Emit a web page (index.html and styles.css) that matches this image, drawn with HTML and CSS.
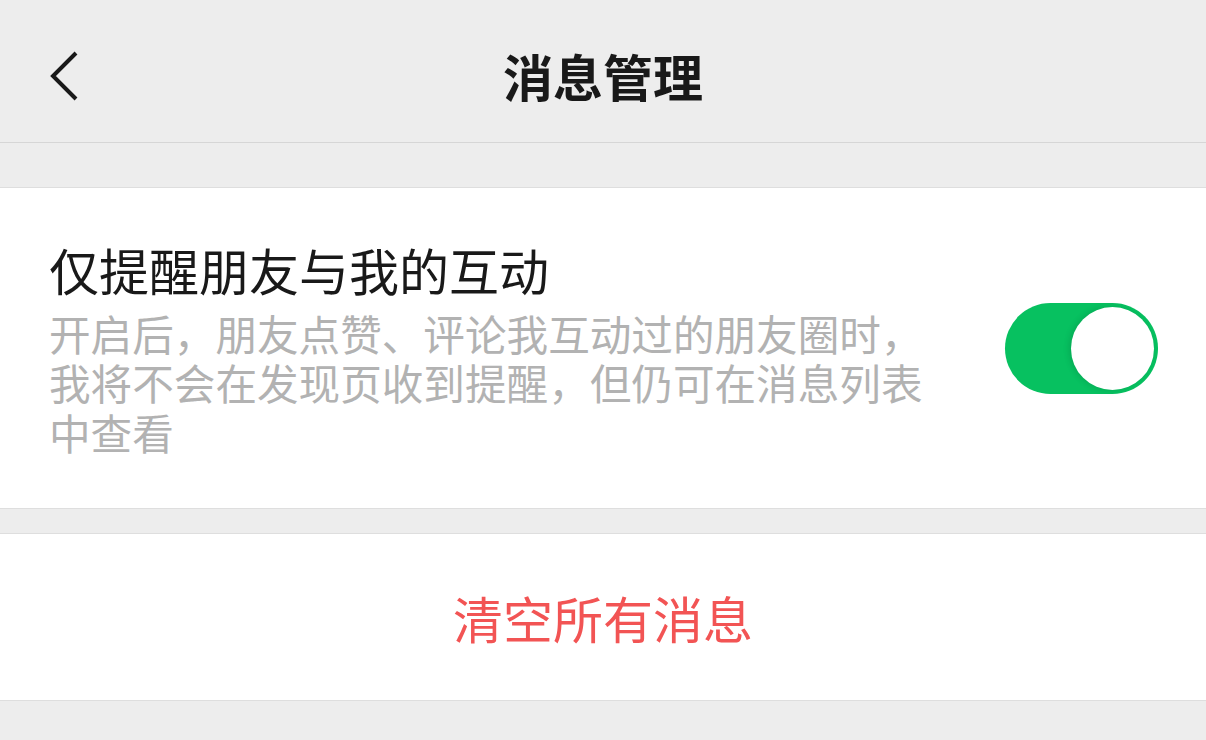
FILE: index.html
```html
<!DOCTYPE html>
<html lang="zh-CN">
<head>
<meta charset="utf-8">
<title>消息管理</title>
<link rel="stylesheet" href="styles.css">
</head>
<body>
<header class="navbar">
  <div class="nav-left">
    <svg class="back" width="40" height="60" viewBox="0 0 40 60" aria-hidden="true">
      <polyline points="28,4 5,27 28,50" fill="none" stroke="#191919" stroke-width="4" stroke-linecap="butt" stroke-linejoin="miter"/>
    </svg>
  </div>
  <h1 class="nav-title">消息管理</h1>
  <div class="nav-right"></div>
</header>

<section class="group group-first">
  <div class="setting-row">
    <div class="setting-text">
      <div class="setting-title">仅提醒朋友与我的互动</div>
      <div class="setting-desc">开启后，朋友点赞、评论我互动过的朋友圈时，我将不会在发现页收到提醒，但仍可在消息列表中查看</div>
    </div>
    <div class="switch switch-on"><div class="switch-knob"></div></div>
  </div>
</section>

<section class="group group-second">
  <div class="danger-row">清空所有消息</div>
</section>
</body>
</html>
```

FILE: styles.css
```css
html, body {
  margin: 0;
  padding: 0;
}
body {
  background: #ededed;
  font-family: "Noto Sans CJK SC", "Noto Sans", sans-serif;
  color: #191919;
  width: 1206px;
  height: 740px;
  overflow: hidden;
}
.navbar {
  box-sizing: border-box;
  height: 143px;
  padding-top: 8px;
  border-bottom: 1px solid #d6d6d6;
  display: grid;
  grid-template-columns: 1fr auto 1fr;
  align-items: center;
}
.nav-left {
  padding-left: 48px;
  display: flex;
  align-items: center;
}
.back {
  display: block;
  margin-top: 8px;
}
.nav-title {
  margin: 0;
  font-size: 50px;
  font-weight: 700;
  line-height: 60px;
  color: #191919;
}
.group {
  background: #fff;
  border-top: 1px solid #dedede;
  border-bottom: 1px solid #dedede;
}
.group-first {
  margin-top: 44px;
}
.group-second {
  margin-top: 24px;
}
.setting-row {
  box-sizing: border-box;
  height: 320px;
  padding: 0 48px 0 49px;
  display: flex;
  align-items: center;
  justify-content: space-between;
}
.setting-text {
  padding-top: 0;
}
.setting-title {
  font-size: 50px;
  line-height: 60px;
  color: #191919;
}
.setting-desc {
  margin-top: 10px;
  font-size: 41.6px;
  line-height: 49.5px;
  color: #b2b2b2;
  max-width: 900px;
}
.switch {
  box-sizing: border-box;
  width: 153px;
  height: 91px;
  border-radius: 46px;
  padding: 4px;
  display: flex;
  justify-content: flex-end;
  flex-shrink: 0;
}
.switch-on {
  background: #07c160;
}
.switch-knob {
  width: 83px;
  height: 83px;
  border-radius: 50%;
  background: #fff;
  box-shadow: -2px 0 6px rgba(0, 0, 0, 0.12);
}
.danger-row {
  height: 166px;
  line-height: 166px;
  text-align: center;
  font-size: 50px;
  color: #f25454;
}
```
